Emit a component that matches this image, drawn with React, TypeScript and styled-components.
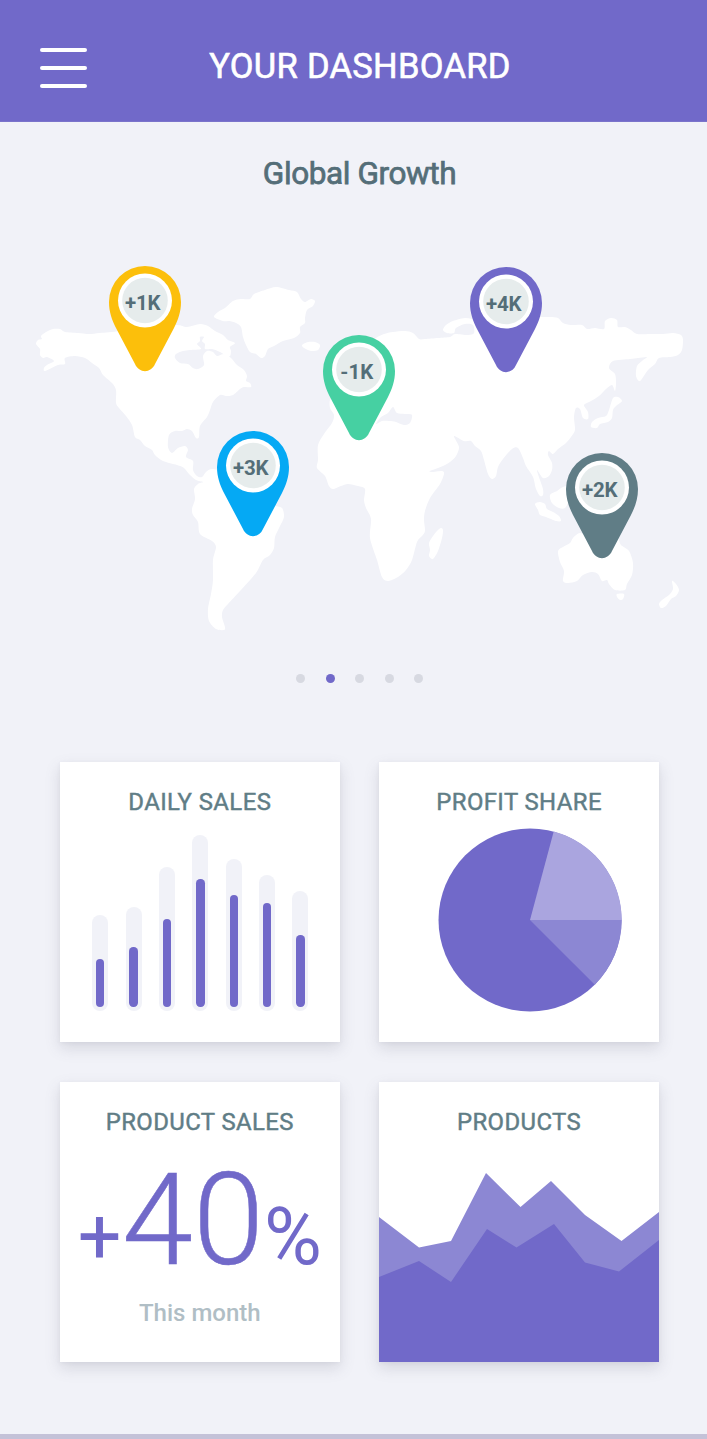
import React from "react";
import styled, { createGlobalStyle } from "styled-components";

const GlobalStyle = createGlobalStyle`
  *, *::before, *::after { box-sizing: border-box; }
  body {
    margin: 0;
    background: #f1f2f8;
    font-family: Roboto, "Liberation Sans", sans-serif;
  }
`;

const purple = "#7169c9";
const purpleMid = "#8c87d3";
const purpleLight = "#aaa5df";
const slate = "#607d86";

const Screen = styled.div`
  display: flex;
  flex-direction: column;
  width: 707px;
  height: 1439px;
  overflow: hidden;
  background: #f1f2f8;
  border-bottom: 5px solid #c4c2d8;
`;

const Header = styled.header`
  display: grid;
  grid-template-columns: 87px 1fr 74px;
  align-items: center;
  flex: none;
  height: 122px;
  background: ${purple};
  border-bottom: 1px solid #7b74cb;
`;

const MenuButton = styled.button`
  display: flex;
  flex-direction: column;
  gap: 14px;
  margin: 14px 0 0 40px;
  padding: 0;
  border: 0;
  background: none;
`;

const MenuLine = styled.span`
  display: block;
  width: 47px;
  height: 4px;
  border-radius: 2px;
  background: #fff;
`;

const Title = styled.h1`
  margin: 10px 0 0;
  color: #fff;
  font-size: 34.5px;
  line-height: 40px;
  font-weight: 400;
  letter-spacing: 0.3px;
  -webkit-text-stroke: 0.6px currentColor;
  text-align: center;
  white-space: nowrap;
`;

const Subtitle = styled.h2`
  flex: none;
  margin: 32px 0 0;
  padding-left: 12px;
  color: #546e78;
  font-size: 31.5px;
  line-height: 40px;
  font-weight: 400;
  letter-spacing: -0.4px;
  -webkit-text-stroke: 0.75px currentColor;
  text-align: center;
`;

const MapArea = styled.section`
  position: relative;
  flex: none;
  height: 446px;
  margin-top: 16px;
`;

const MapSvg = styled.svg`
  display: block;
  width: 707px;
  height: 446px;
`;

const PinSvg = styled.svg<{ $x: number; $y: number }>`
  position: absolute;
  left: ${(p) => p.$x}px;
  top: ${(p) => p.$y - 210}px;
  width: 72px;
  height: 106px;
`;

const PinLabel = styled.text`
  fill: #546e78;
  font-size: 20.5px;
  font-weight: 700;
`;

const Dots = styled.nav`
  display: flex;
  flex: none;
  justify-content: center;
  gap: 20.5px;
  margin-top: 17.5px;
  padding-left: 12px;
`;

const Dot = styled.span<{ $active?: boolean }>`
  width: 9px;
  height: 9px;
  border-radius: 50%;
  background: ${(p) => (p.$active ? purple : "#d7d9e1")};
`;

const Cards = styled.main`
  display: grid;
  grid-template-columns: 280px 280px;
  grid-auto-rows: 280px;
  gap: 40px 39.3px;
  margin: 79px 0 0 59.8px;
`;

const Card = styled.section`
  display: flex;
  flex-direction: column;
  background: #fff;
  box-shadow: 0 6px 14px rgba(90, 90, 110, 0.18), 0 1px 4px rgba(90, 90, 110, 0.06);
`;

const CardTitle = styled.h3`
  flex: none;
  margin: 25px 0 0;
  color: ${slate};
  font-size: 23.9px;
  line-height: 30px;
  font-weight: 400;
  letter-spacing: 0.42px;
  -webkit-text-stroke: 0.45px currentColor;
  text-align: center;
  white-space: nowrap;
`;

const Bars = styled.div`
  display: flex;
  align-items: flex-end;
  justify-content: space-between;
  height: 176px;
  margin: 18px 31.3px 0 32.5px;
`;

const Track = styled.div`
  display: flex;
  align-items: flex-end;
  justify-content: center;
  width: 16px;
  padding-bottom: 3.5px;
  border-radius: 8px;
  background: #f1f2f8;
`;

const Fill = styled.div`
  width: 8.4px;
  border-radius: 4.2px;
  background: ${purple};
`;

const PieSvg = styled.svg`
  display: block;
  width: 184px;
  height: 184px;
  margin: 11.5px 0 0 59px;
`;

const Figure = styled.div`
  display: flex;
  align-items: baseline;
  height: 150px;
  margin-top: 8px;
  padding-left: 18px;
  color: ${purple};
  line-height: 150px;
  white-space: nowrap;
`;

const Sign = styled.span`
  position: relative;
  top: -1px;
  font-size: 77px;
  font-weight: 400;
  letter-spacing: 0.5px;
`;

const Amount = styled.span`
  font-size: 128px;
  font-weight: 300;
  -webkit-text-stroke: 0.5px currentColor;
`;

const Percent = styled.span`
  font-size: 79px;
  font-weight: 400;
`;

const Period = styled.p`
  margin: 3px 0 0;
  color: #b0bec5;
  font-size: 24px;
  line-height: 30px;
  font-weight: 500;
  text-align: center;
`;

const AreaSvg = styled.svg`
  display: block;
  width: 280px;
  height: 190px;
  margin-top: auto;
`;

type Point = [number, number];

/* Turns a closed ring of points into a smooth outline. */
function outline(data: string): string {
  const pts = data
    .trim()
    .split(/\s+/)
    .map((pair) => pair.split(",").map(Number) as Point);
  const n = pts.length;
  const at = (i: number) => pts[(i + n) % n];
  let d = `M${pts[0][0]} ${pts[0][1]}`;
  for (let i = 0; i < n; i++) {
    const [a, b, c, e] = [at(i - 1), at(i), at(i + 1), at(i + 2)];
    const k = 7;
    d += `C${b[0] + (c[0] - a[0]) / k} ${b[1] + (c[1] - a[1]) / k} ${c[0] - (e[0] - b[0]) / k} ${c[1] - (e[1] - b[1]) / k} ${c[0]} ${c[1]}`;
  }
  return d + "Z";
}

const land = [
  // Americas
  `36,344 38,340 42,339 41,336 46,332 53,329 60,329 65,332 78,333 89,334 100,333 120,331 150,326 177,325 187,327 200,324 208,326 215,331 223,335 228,340 235,343 230,347 231,351 230,356 225,355 220,352 212,349 205,349 205,344 202,341 204,337 200,337 200,341 197,344 201,349 190,350 183,351 176,354 175,358 180,363 188,364 193,368 198,369 204,365 203,356 207,351 213,352 217,356 224,354 231,358 237,365 244,370 247,376 246,381 250,383 251,387 244,387 240,389 233,395 226,396 220,395 213,402 210,410 207,417 200,426 199,437 196,438 192,431 187,429 182,431 175,431 169,435 168,447 172,453 178,448 185,446 188,450 186,457 193,461 193,470 197,476 202,477 206,472 212,469 225,472 240,482 262,496 273,505 282,508 284,517 280,526 275,537 274,548 270,555 263,560 256,573 240,591 228,604 223,610 222,617 225,627 224,630 216,629 209,621 208,609 211,594 213,580 213,560 216,547 212,541 200,534 198,522 193,515 192,509 195,499 194,489 198,484 203,482 196,480 190,475 184,468 177,465 163,461 155,455 152,450 145,446 140,440 135,437 132,425 126,416 119,408 116,403 116,390 112,383 103,375 99,368 92,363 85,358 75,356 65,358 65,364 58,365 45,371 44,368 47,365 54,361 47,357 43,358 40,355 40,349`,
  // Greenland
  `214,317 218,312 225,308 233,301 241,299 250,299 254,294 265,290 276,287 289,290 297,292 301,299 305,302 311,299 315,301 313,306 307,310 305,318 305,323 300,327 300,333 294,338 283,341 274,346 268,349 265,356 261,358 256,354 250,352 246,345 243,337 241,327 236,323 229,321 223,321`,
  // Iceland
  `302,345 308,342 315,342 320,345 318,350 311,351 304,348`,
  // Europe, Asia and Africa
  `335,395 345,360 368,346 376,338 384,334 393,332 405,331 413,333 419,339 425,339 438,338 450,337 455,334 468,335 474,333 473,325 465,324 456,328 454,333 447,333 443,330 446,325 453,321 465,318 480,320 500,318 543,317 550,317 558,318 563,323 571,325 582,325 587,329 595,328 604,329 605,321 611,318 617,320 618,327 625,327 631,330 637,334 650,334 663,334 673,333 681,335 683,340 682,350 678,355 670,357 659,358 655,364 648,370 640,381 636,376 637,366 642,361 647,357 638,358 630,359 613,361 609,368 615,374 616,383 615,391 612,385 606,389 599,396 591,401 584,405 588,412 588,419 583,418 580,409 576,408 574,417 575,430 571,437 566,443 558,449 553,454 549,451 548,455 552,463 552,470 549,476 543,478 537,470 540,480 543,489 543,495 540,496 536,489 533,477 526,466 523,458 518,448 512,449 503,459 498,467 496,476 492,479 488,474 484,460 481,451 475,446 471,441 464,441 454,436 459,447 456,456 450,462 443,466 430,471 432,472 442,471 444,474 440,484 430,498 425,511 424,520 425,531 422,536 417,542 412,560 406,570 398,577 388,581 382,577 377,560 370,538 371,519 366,508 364,500 365,489 358,486 348,484 341,486 333,489 329,486 325,476 317,468 318,460 318,445 324,434 332,423 334,415 330,408 330,400`,
  // Madagascar
  `441,528 443,530 442,538 438,551 433,559 429,556 430,550 429,543 433,536 437,531`,
  // Japan
  `613,398 618,397 622,401 616,406 613,410 612,418 608,422 600,424 597,428 591,427 592,422 598,418 606,416 609,410`,
  // Indonesia
  `535,504 540,502 545,504 547,509 553,512 559,516 561,521 556,521 546,517 540,515 538,510`,
  `550,495 557,491 563,487 572,486 569,500 565,508 559,508 552,503`,
  // Australia and New Zealand
  `558,551 563,547 570,543 573,538 580,533 590,538 600,547 612,538 618,538 621,545 629,551 633,563 632,575 627,584 625,590 615,590 609,584 607,580 602,581 598,574 592,572 583,575 577,581 568,583 563,581 564,571 560,562`,
  `617,594 624,594 623,599 620,600 617,597`,
  `672,581 676,584 679,590 676,596 671,599 666,606 661,608 659,604 662,600 669,595 673,589`,
].map(outline);

const mediterranean = outline(
  "376,424 381,417 388,413 393,407 397,413 405,414 412,415 410,423 404,425 396,422 389,421 382,421",
);

interface PinData {
  x: number;
  y: number;
  color: string;
  label: string;
  width: number;
}

const pins: PinData[] = [
  { x: 108.8, y: 265.5, color: "#fcbf0b", label: "+1K", width: 35.5 },
  { x: 470.2, y: 267.3, color: purple, label: "+4K", width: 35.5 },
  { x: 322.8, y: 334.7, color: "#46d0a2", label: "-1K", width: 33 },
  { x: 216.8, y: 430.9, color: "#05a9f4", label: "+3K", width: 35.5 },
  { x: 566.2, y: 452.5, color: slate, label: "+2K", width: 35.5 },
];

const Pin = ({ x, y, color, label, width }: PinData) => (
  <PinSvg $x={x} $y={y} viewBox="0 0 72 106">
    <path
      d="M0 36A36 36 0 0 1 72 36C72 46 69 54 65 62L46 98C42 107.500 30 107.500 26 98L7 62C3 54 0 46 0 36Z"
      fill={color}
    />
    <circle cx="36" cy="34.500" r="27" fill="#fff" />
    <circle cx="36" cy="34.500" r="22.800" fill="#e6ecec" />
    <PinLabel x={33.8 - width / 2} y="43.8" textLength={width}>
      {label}
    </PinLabel>
  </PinSvg>
);

const dailySales = [
  { track: 96, fill: 48 },
  { track: 104, fill: 60 },
  { track: 144, fill: 88 },
  { track: 176, fill: 128 },
  { track: 152, fill: 112 },
  { track: 136, fill: 104 },
  { track: 120, fill: 72 },
];

export default function App() {
  return (
    <Screen>
      <GlobalStyle />
      <Header>
        <MenuButton aria-label="Menu">
          <MenuLine />
          <MenuLine />
          <MenuLine />
        </MenuButton>
        <Title>YOUR DASHBOARD</Title>
      </Header>
      <Subtitle>Global Growth</Subtitle>
      <MapArea>
        <MapSvg viewBox="0 210 707 446">
          {land.map((d, i) => (
            <path key={i} d={d} fill="#fff" />
          ))}
          <path d={mediterranean} fill="#f1f2f8" />
        </MapSvg>
        {pins.map((pin) => (
          <Pin key={pin.label} {...pin} />
        ))}
      </MapArea>
      <Dots>
        <Dot />
        <Dot $active />
        <Dot />
        <Dot />
        <Dot />
      </Dots>
      <Cards>
        <Card>
          <CardTitle>DAILY SALES</CardTitle>
          <Bars>
            {dailySales.map((bar, i) => (
              <Track key={i} style={{ height: bar.track }}>
                <Fill style={{ height: bar.fill }} />
              </Track>
            ))}
          </Bars>
        </Card>
        <Card>
          <CardTitle>PROFIT SHARE</CardTitle>
          <PieSvg viewBox="0 0 184 184">
            <circle cx="92" cy="92" r="91.500" fill={purple} />
            <path d="M92 92L115.700 3.400A91.700 91.700 0 0 1 183.700 92Z" fill={purpleLight} />
            <path d="M92 92H183.700A91.700 91.700 0 0 1 156.800 156.800Z" fill={purpleMid} />
          </PieSvg>
        </Card>
        <Card>
          <CardTitle>PRODUCT SALES</CardTitle>
          <Figure>
            <Sign>+</Sign>
            <Amount>40</Amount>
            <Percent>%</Percent>
          </Figure>
          <Period>This month</Period>
        </Card>
        <Card>
          <CardTitle>PRODUCTS</CardTitle>
          <AreaSvg viewBox="0 0 280 190">
            <path
              d="M0 45L40 75.500L72 69L107 1L141.500 35L172 9L206 43L242.500 69L280 40V190H0Z"
              fill={purpleMid}
            />
            <path
              d="M0 105L40 89L72 110L108 57L137.500 75.500L175 52L206 90.500L240 99.500L280 68V190H0Z"
              fill={purple}
            />
          </AreaSvg>
        </Card>
      </Cards>
    </Screen>
  );
}
